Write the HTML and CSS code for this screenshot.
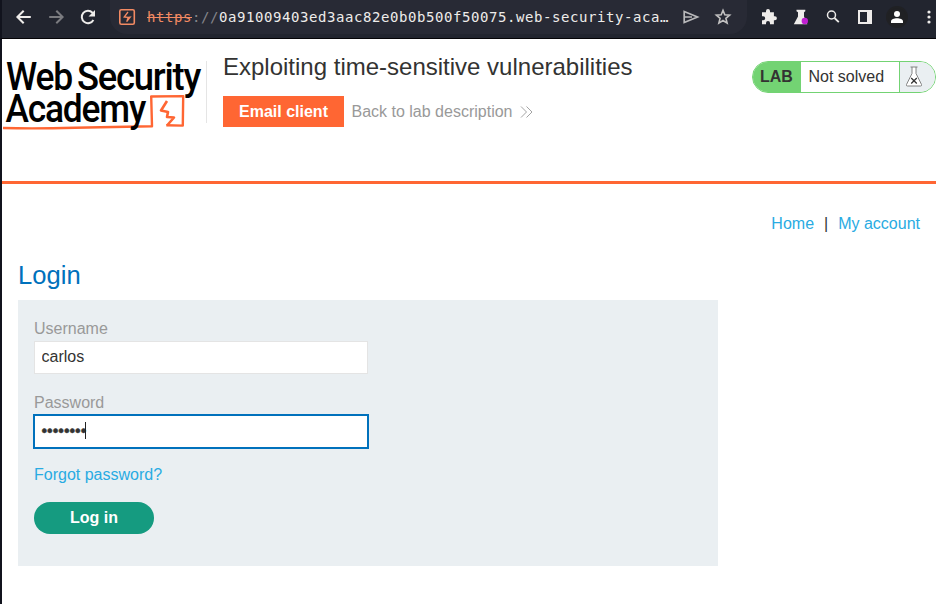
FILE: index.html
```html
<!DOCTYPE html>
<html lang="en">
<head>
<meta charset="utf-8">
<title>Exploiting time-sensitive vulnerabilities</title>
<link rel="stylesheet" href="styles.css">
</head>
<body>
<header class="toolbar">
  <nav class="nav-buttons">
    <svg width="18" height="18" viewBox="0 0 18 18"><path d="M15.8 9H2.500M8.700 2.700 2.400 9l6.300 6.300" fill="none" stroke="#eeecea" stroke-width="2"/></svg>
    <svg width="18" height="18" viewBox="0 0 18 18"><path d="M2.200 9h13.300M9.300 2.700 15.600 9l-6.300 6.300" fill="none" stroke="#7b7c80" stroke-width="2"/></svg>
    <svg width="18" height="18" viewBox="0 0 18 18"><path d="M14.400 12A6.200 6.200 0 1 1 13.500 4.700L15 6.200" fill="none" stroke="#eeecea" stroke-width="2"/><path d="M16 2v6.500H9.500z" fill="#eeecea"/></svg>
  </nav>
  <div class="address">
    <svg class="site" width="18" height="18" viewBox="0 0 18 18"><rect x="1.800" y="1.800" width="14.500" height="14.500" rx="1.500" fill="none" stroke="#f38a63" stroke-width="1.600"/><path d="M10 4 6.200 9l4 .5-1.500 4.200M6.200 9l4 .4 2-.3-3.500 4.600" fill="none" stroke="#f38a63" stroke-width="1.300"/></svg>
    <div class="url"><span class="scheme">https</span><span class="slashes">://</span>0a91009403ed3aac82e0b0b500f50075.web-security-aca…</div>
    <svg class="send" width="18" height="18" viewBox="0 0 18 18"><path d="M2.200 3.500 15.500 9 2.200 14.500zM3 9h7" fill="none" stroke="#b9b9bb" stroke-width="1.700"/></svg>
    <svg class="star" width="18" height="18" viewBox="0 0 18 18"><path d="m9 2.300 1.800 4.500 4.800.4-3.700 3.100 1.200 4.800L9 12.500l-4.100 2.600 1.200-4.800-3.700-3.100 4.800-.4z" fill="none" stroke="#c2c1c1" stroke-width="1.600"/></svg>
  </div>
  <div class="extensions">
    <svg width="18" height="18" viewBox="0 0 18 18"><path d="M2 4.200h4V3a2 2 0 0 1 4 0v1.200h3.900v4h1a2 2 0 0 1 0 4h-1v4H10v-1.300a2 2 0 0 0-4 0v1.300H2v-4h1.200a2 2 0 0 0 0-4H2z" fill="#eeecea"/></svg>
    <svg width="18" height="18" viewBox="0 0 18 18"><path d="M4.500 1.800h8.800v1.400L12 4.200V8.500l3.300 7.700H1.800L6 8.500V4.200L4.500 3.200z" fill="#eeecea"/><circle cx="12.800" cy="13" r="3.200" fill="#c01fd1"/></svg>
    <svg width="18" height="18" viewBox="0 0 18 18"><circle cx="7.500" cy="7" r="4" fill="none" stroke="#eeecea" stroke-width="1.500"/><path d="m10.500 10 4.300 4.200" stroke="#eeecea" stroke-width="1.800"/></svg>
    <svg width="18" height="18" viewBox="0 0 18 18"><path fill-rule="evenodd" d="M2 2h14v14H2zM4 4v10h7V4z" fill="#eeecea"/></svg>
    <span class="avatar"><svg width="18" height="18" viewBox="0 0 18 18"><circle cx="9" cy="6" r="3" fill="#fff"/><path d="M3 15v-1.600c0-4.200 12-4.200 12 0V15z" fill="#fff"/></svg></span>
    <svg width="18" height="18" viewBox="0 0 18 18" fill="#eeecea"><circle cx="9" cy="4" r="1.600"/><circle cx="9" cy="9" r="1.600"/><circle cx="9" cy="14" r="1.600"/></svg>
  </div>
</header>
<div class="page">
  <section class="lab-header">
    <svg class="logo" width="204" height="80" viewBox="2 55 204 80">
      <path d="M3 128q30 .8 72-.2l77-1.500-.8-29.800 32-.4-.4 29.500-16.500-.3" class="ink"/>
      <path d="m167 101-6 9.500 7 1.500-1 5 7 .5-7 8" class="ink bolt"/>
      <g class="wordmark">
        <text x="6" y="90" textLength="66" lengthAdjust="spacingAndGlyphs">Web</text>
        <text x="77" y="90" textLength="123" lengthAdjust="spacingAndGlyphs">Security</text>
        <text x="5.500" y="122" textLength="139.500" lengthAdjust="spacingAndGlyphs">Academy</text>
      </g>
    </svg>
    <div class="divider"></div>
    <div class="title-block">
      <h2>Exploiting time-sensitive vulnerabilities</h2>
      <div class="actions">
        <a class="email">Email client</a>
        <a class="back">Back to lab description <svg width="13" height="12" viewBox="0 0 13 12"><path d="m1 .5 5.500 5.500L1 11.500M6.500.5 12 6l-5.500 5.500" fill="none" stroke="#999" stroke-width=".9"/></svg></a>
      </div>
    </div>
    <div class="status">
      <span class="lab">LAB</span><span class="state">Not solved</span>
      <span class="flask"><svg width="18" height="22" viewBox="0 0 18 22"><path d="M5.500 1h7M7 1v6.500L1.500 18.500q-.5 1.500 1 1.500h13q1.500 0 1-1.500L11 7.500V1" fill="#fff" stroke="#777" stroke-width=".9"/><path d="m6.200 12 5.600 5.500m0-5.500-5.600 5.500" stroke="#333" stroke-width="1.300"/></svg></span>
    </div>
  </section>
  <main>
    <nav class="links"><a>Home</a><span>|</span><a>My account</a></nav>
    <h1>Login</h1>
    <form class="login">
      <label for="user">Username</label>
      <input id="user" type="text" value="carlos">
      <label for="pass">Password</label>
      <div class="password" id="pass"><span class="dots">••••••••</span><i class="caret"></i></div>
      <a class="forgot">Forgot password?</a>
      <button type="button">Log in</button>
    </form>
  </main>
</div>
</body>
</html>
```
FILE: styles.css
```css
* { box-sizing: border-box; }
body { margin: 0; height: 604px; overflow: hidden; background: #fff; color: #333332; font: 16px/20px "Liberation Sans", Arial, sans-serif; }
svg { display: block; flex: none; }
.toolbar { height: 39px; border-bottom: 1px solid #050407; border-left: 2px solid #11131d; background: #22252f; display: flex; align-items: flex-start; overflow: hidden; }
.nav-buttons { display: flex; gap: 14px; padding: 8px 0 0 13px; width: 108px; flex: none; }
.address { width: 637px; height: 34px; border-radius: 0 0 17px 17px; background: #282a35; display: flex; align-items: center; padding-left: 8px; flex: none; }
.url { width: 535px; margin-left: 11px; white-space: pre; color: #eeecea; font: 14px/18px "DejaVu Sans Mono", monospace; letter-spacing: .571px; }
.scheme { color: #f38a63; text-decoration: line-through; }
.slashes { color: #85868b; }
.star { margin-left: 14px; }
.extensions { display: flex; gap: 14px; padding: 8px 0 0 13px; flex: none; }
.avatar { width: 18px; height: 18px; border-radius: 50%; background: #202124; box-shadow: 0 0 0 2px #202124; }
.page { height: 565px; border-left: 2px solid #11131d; }
.lab-header { height: 145px; border-bottom: 3px solid #ff6633; display: flex; align-items: flex-start; }
.logo { margin-top: 16px; overflow: visible; }
.wordmark { font: 500 38.500px Roboto, sans-serif; letter-spacing: -1.300px; fill: #000; }
.ink { fill: none; stroke: #ff6633; stroke-width: 2.400; stroke-linejoin: round; }
.bolt { stroke-width: 2.600; }
.divider { width: 1px; height: 62px; margin-top: 22px; background: #e5e5e5; }
.title-block { margin-left: 16px; padding-top: 14px; }
h2 { margin: 0; font-size: 24px; line-height: 28px; font-weight: 400; white-space: nowrap; }
.actions { display: flex; align-items: center; margin-top: 15px; }
.email { width: 121px; height: 31px; line-height: 31px; text-align: center; color: #fff; background: #ff6633; font-weight: 700; }
.back { display: flex; align-items: center; gap: 7.500px; margin-left: 7.500px; color: #999; }
.status { margin: 22px 0 0 auto; width: 184px; height: 32px; border: 1px solid #73d373; border-radius: 16px; overflow: hidden; display: flex; line-height: 30px; }
.lab { width: 48px; padding-left: 7px; background: #73d373; font-weight: 700; }
.state { width: 99px; padding-left: 7.500px; border-right: 1px solid #73d373; }
.flask { flex: 1; background: #eaeff2; padding: 4px 0 0 5px; }
main { padding: 30px 16px 0; }
.links { display: flex; justify-content: flex-end; gap: 10px; }
.links a, .forgot { color: #29abe2; }
h1 { margin: 26px 0 10px; font-size: 25.600px; line-height: 30px; font-weight: 400; color: #0071bc; }
.login { width: 700px; height: 266px; background: #eaeff2; padding: 19px 16px; display: flex; flex-direction: column; align-items: flex-start; }
label { color: #999; line-height: 20px; }
input { width: 334px; height: 33px; margin: 2px 0 19px; padding: 0 6.500px 2px; border: 1px solid #e4e4e4; background: #fff; color: #333332; font: inherit; }
.password { width: 336px; height: 35px; margin: 1px 0 16px -1px; padding: 0 6.500px 2px; border: 2px solid #0071bc; background: #fff; display: flex; align-items: center; }
.dots { -webkit-text-stroke: .5px #333332; }
.caret { width: 1px; height: 17px; background: #222; margin-left: -1.500px; }
.forgot { line-height: 20px; }
button { width: 120px; height: 32px; margin-top: 17px; border: 0; border-radius: 16px; background: #159b80; color: #fff; font: 700 16px/32px "Liberation Sans", Arial, sans-serif; padding: 0; }
```
